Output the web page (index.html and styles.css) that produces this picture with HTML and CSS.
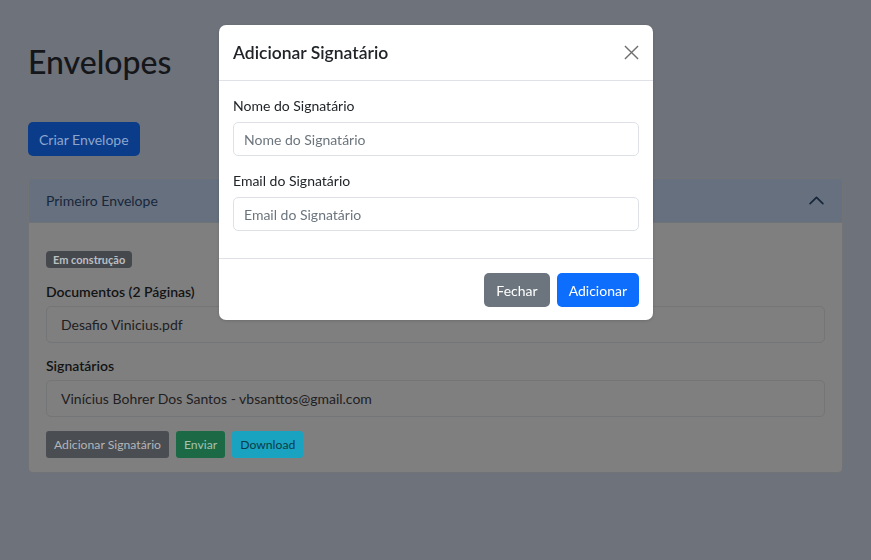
FILE: index.html
```html
<!DOCTYPE html>
<html lang="pt-BR">
<head>
<meta charset="utf-8">
<title>Envelopes</title>
<link rel="stylesheet" href="styles.css">
</head>
<body>
<main class="container">
  <h1 class="title">Envelopes</h1>
  <button class="btn btn-create">Criar Envelope</button>

  <section class="accordion">
    <div class="acc-header">
      <span class="acc-title">Primeiro Envelope</span>
      <svg class="chevron" viewBox="0 0 16 16" width="17" height="17"><path d="M2 11 L8 5 L14 11" fill="none" stroke="currentColor" stroke-width="1.6" stroke-linecap="round" stroke-linejoin="round"/></svg>
    </div>
    <div class="acc-body">
      <div class="badge-row"><span class="badge">Em construção</span></div>
      <div class="section-label">Documentos (2 Páginas)</div>
      <ul class="list">
        <li class="list-item">Desafio Vinicius.pdf</li>
      </ul>
      <div class="section-label">Signatários</div>
      <ul class="list">
        <li class="list-item">Vinícius Bohrer Dos Santos - vbsanttos@gmail.com</li>
      </ul>
      <div class="actions">
        <button class="btn-sm btn-gray">Adicionar Signatário</button>
        <button class="btn-sm btn-green">Enviar</button>
        <button class="btn-sm btn-cyan">Download</button>
      </div>
    </div>
  </section>
</main>

<div class="modal">
  <div class="modal-header">
    <h5 class="modal-title">Adicionar Signatário</h5>
    <button class="close" aria-label="Fechar">
      <svg viewBox="0 0 16 16" width="15" height="15"><path d="M1 1 L15 15 M15 1 L1 15" fill="none" stroke="currentColor" stroke-width="1.5"/></svg>
    </button>
  </div>
  <div class="modal-body">
    <div class="field">
      <label class="form-label">Nome do Signatário</label>
      <input class="form-control" type="text" placeholder="Nome do Signatário">
    </div>
    <div class="field">
      <label class="form-label">Email do Signatário</label>
      <input class="form-control" type="email" placeholder="Email do Signatário">
    </div>
  </div>
  <div class="modal-footer">
    <button class="btn btn-secondary">Fechar</button>
    <button class="btn btn-primary">Adicionar</button>
  </div>
</div>
</body>
</html>
```
FILE: styles.css
```css
* { box-sizing: border-box; }
html, body { margin: 0; padding: 0; }
body {
  background: #6e727b;
  font-family: Lato, "Noto Sans", sans-serif;
  font-size: 14px;
  color: #141618;
  height: 560px;
  overflow: hidden;
}
.container {
  width: 843px;
  padding-left: 28px;
}
.title {
  margin: 43px 0 0;
  font-size: 32px;
  line-height: 38px;
  font-weight: 500;
  color: #141619;
}
.btn {
  font-family: inherit;
  font-size: 14px;
  line-height: 21px;
  height: 34px;
  padding: 0 11px;
  border: 1px solid transparent;
  border-radius: 5px;
  cursor: pointer;
}
.btn-create {
  margin-top: 41px;
  background: #0b3c8a;
  color: #8da5cc;
  padding: 0 10px;
}
.accordion {
  margin-top: 22px;
  border: 1px solid #717376;
  border-radius: 5px;
  overflow: hidden;
}
.acc-header {
  height: 44px;
  background: #66707e;
  display: flex;
  align-items: center;
  justify-content: space-between;
  padding: 0 17px 0 17px;
  border-bottom: 1px solid #6e7378;
}
.acc-title { color: #18273b; font-size: 14px; }
.chevron { color: #18263a; margin-top: -1px; }
.acc-body {
  background: #7f7f7f;
  padding: 28px 17px 14px;
}
.badge-row { height: 17px; }
.badge {
  display: inline-block;
  height: 17px;
  line-height: 17px;
  padding: 0 7px;
  border-radius: 4px;
  background: #45484d;
  color: #bcbfc2;
  font-size: 11px;
  font-weight: 700;
  vertical-align: top;
}
.section-label {
  margin-top: 12px;
  line-height: 24px;
  font-weight: 600;
  color: #121314;
  font-size: 14px;
}
.list {
  list-style: none;
  margin: 3px 0 0;
  padding: 0;
}
.list-item {
  height: 37px;
  line-height: 35px;
  border: 1px solid #747576;
  border-radius: 5px;
  padding: 0 14px;
  color: #1f2022;
  font-size: 14px;
}
.list + .section-label { margin-top: 11px; }
.section-label + .list { margin-top: 2px; }
.actions {
  margin-top: 14px;
  display: flex;
  gap: 7px;
}
.btn-sm {
  font-family: inherit;
  font-size: 12.2px;
  height: 27px;
  line-height: 25px;
  padding: 0 7px;
  border: 1px solid transparent;
  border-radius: 3px;
}
.btn-gray { background: #4a4d52; color: #b3b5b8; }
.btn-green { background: #1b6a45; color: #a3c2b3; }
.btn-cyan { background: #1aa2c1; color: #0b3d4a; }

.modal {
  position: fixed;
  left: 219px;
  top: 25px;
  width: 434px;
  background: #fff;
  border-radius: 7px;
  box-shadow: 0 1px 3px rgba(0,0,0,0.15);
  color: #212529;
}
.modal-header {
  height: 56px;
  display: flex;
  align-items: center;
  justify-content: space-between;
  padding: 0 14px;
  border-bottom: 1px solid #dee2e6;
}
.modal-title {
  margin: 0;
  font-size: 17.5px;
  font-weight: 600;
  color: #212529;
  line-height: 26px;
}
.close {
  background: none;
  border: 0;
  padding: 0;
  color: #6f6f6f;
  width: 15px;
  height: 15px;
  display: flex;
}
.modal-body {
  padding: 14px 14px 13px;
}
.field { margin-bottom: 14px; display: flex; flex-direction: column; }
.form-label {
  line-height: 21px;
  margin-bottom: 6px;
  font-size: 14px;
  color: #212529;
}
.form-control {
  height: 34px;
  border: 1px solid #dee2e6;
  border-radius: 5px;
  padding: 0 10px;
  font-family: inherit;
  font-size: 14px;
  color: #212529;
}
.form-control::placeholder { color: #6c757d; }
.modal-footer {
  border-top: 1px solid #dee2e6;
  padding: 14px 14px 13px;
  display: flex;
  justify-content: flex-end;
  gap: 7px;
}
.btn-secondary { background: #6c757d; color: #fff; }
.btn-primary { background: #0d6efd; color: #fff; }
```
